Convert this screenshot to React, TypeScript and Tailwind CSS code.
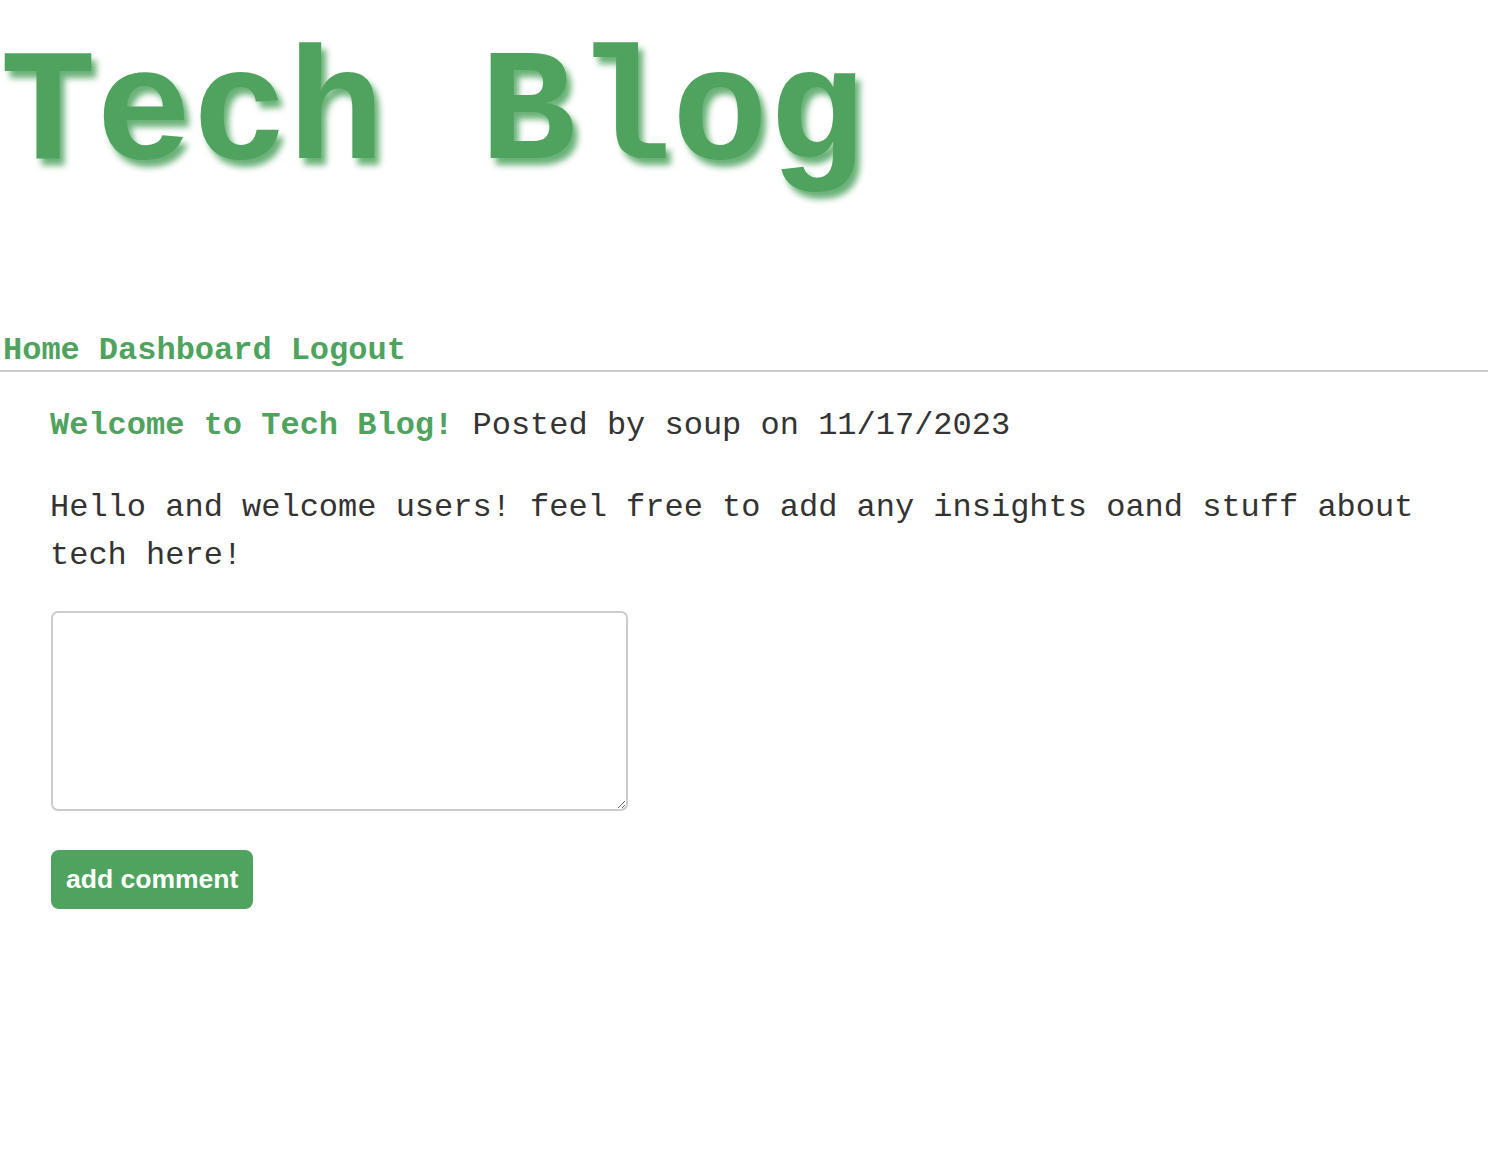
import React from 'react';

const green = 'text-[#4fa35f]';

const App = () => {
  return (
    <div className="min-h-[1168px] bg-white font-['Liberation_Mono','Courier_New',monospace]">
      {/* Header */}
      <header className="pt-[36px]">
        <h1
          className={`text-[160px] leading-[160px] font-bold ${green} [text-shadow:5px_7px_6px_rgba(79,163,95,0.85)]`}
        >
          Tech Blog
        </h1>
      </header>

      {/* Nav */}
      <nav className="mt-[137px] border-b-2 border-[#cccccc] pb-px pl-[3px]">
        <div className={`flex gap-[19px] text-[32px] leading-[36px] font-bold ${green}`}>
          <a href="#">Home</a>
          <a href="#">Dashboard</a>
          <a href="#">Logout</a>
        </div>
      </nav>

      {/* Post */}
      <main className="pl-[50px] pr-[40px]">
        <div className="mt-[36px] text-[32px] leading-[36px] text-[#333333]">
          <span className={`font-bold ${green}`}>Welcome to Tech Blog!</span> Posted by soup on 11/17/2023
        </div>
        <p className="mt-[40px] text-[32px] leading-[48px] text-[#333333]">
          Hello and welcome users! feel free to add any insights oand stuff about tech here!
        </p>

        <textarea className="mt-[31px] block w-[577px] h-[200px] border-2 border-[#cccccc] rounded-[7px] ml-px resize-y" />

        <button className="mt-[39px] ml-px h-[59px] px-[15px] rounded-[8px] bg-[#4fa35f] text-white text-[26.5px] font-bold font-['Liberation_Sans',Arial,sans-serif]">
          add comment
        </button>
      </main>
    </div>
  );
};

export default App;
